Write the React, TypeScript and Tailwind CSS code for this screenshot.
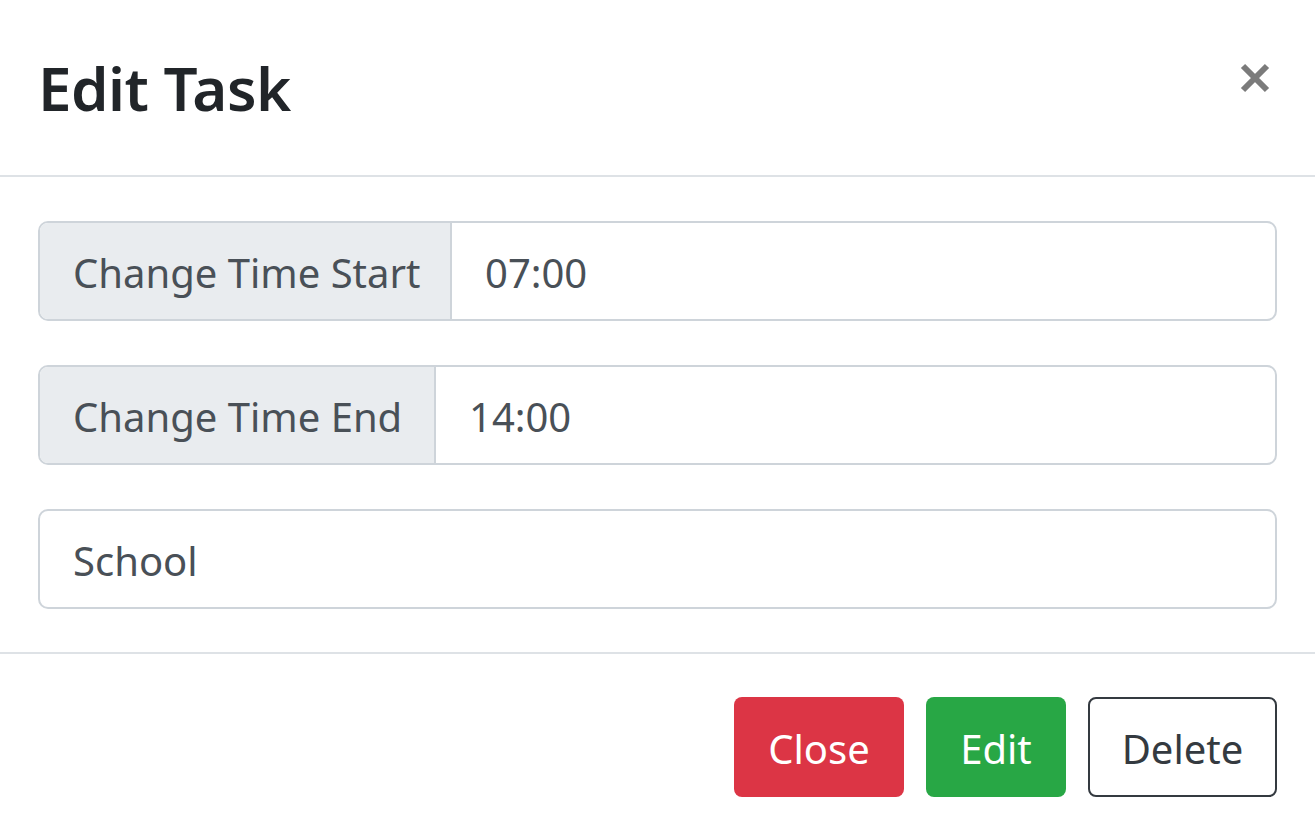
import React from "react";

export default function App() {
  const font = { fontFamily: '"Noto Sans", "Open Sans", sans-serif' };
  return (
    <div className="w-[1315px] h-[833px] bg-white flex flex-col overflow-hidden" style={font}>
      <div className="h-[177px] border-b-2 border-[#dee2e6] flex items-start justify-between pl-[38px] pr-[44px] shrink-0">
        <h1 className="mt-[48px] text-[60px] leading-[80px] font-semibold text-[#212529] tracking-[-0.5px]">Edit Task</h1>
        <svg width="32" height="32" viewBox="0 0 32 32" className="mt-[62px]">
          <path d="M4 4 L28 28 M28 4 L4 28" stroke="#7b7b7b" strokeWidth="6" strokeLinecap="butt" />
        </svg>
      </div>
      <div className="flex flex-col gap-[44px] px-[38px] pt-[44px] pb-[43px] border-b-2 border-[#dee2e6] shrink-0">
        <div className="flex h-[100px] rounded-[10px] border-2 border-[#ced4da] overflow-hidden text-[40px] text-[#495057]">
          <div className="w-[412px] shrink-0 bg-[#e9ecef] border-r-2 border-[#ced4da] flex items-center pl-[33px] pt-[3px]">Change Time Start</div>
          <div className="flex-1 flex items-center pl-[33px] pt-[3px]">07:00</div>
        </div>
        <div className="flex h-[100px] rounded-[10px] border-2 border-[#ced4da] overflow-hidden text-[40px] text-[#495057]">
          <div className="w-[396px] shrink-0 bg-[#e9ecef] border-r-2 border-[#ced4da] flex items-center pl-[33px] pt-[3px]">Change Time End</div>
          <div className="flex-1 flex items-center pl-[33px] pt-[3px]">14:00</div>
        </div>
        <div className="flex h-[100px] rounded-[10px] border-2 border-[#ced4da] overflow-hidden text-[40px] text-[#495057] items-center pl-[33px] pt-[3px]">
          School
        </div>
      </div>
      <div className="flex justify-end gap-[22px] pr-[38px] pt-[43px]">
        <button className="w-[170px] h-[100px] rounded-[8px] bg-[#dc3545] text-white text-[40px] flex items-center justify-center pt-[3px]">Close</button>
        <button className="w-[140px] h-[100px] rounded-[8px] bg-[#28a745] text-white text-[40px] flex items-center justify-center pt-[3px]">Edit</button>
        <button className="w-[189px] h-[100px] rounded-[8px] border-2 border-[#343a40] bg-white text-[#343a40] text-[40px] flex items-center justify-center pt-[3px]">Delete</button>
      </div>
    </div>
  );
}
